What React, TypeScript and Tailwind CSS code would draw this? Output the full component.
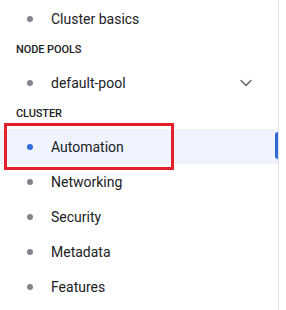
import { ChevronDown } from 'lucide-react';

type Item = { label: string; active?: boolean; expandable?: boolean };

function NavItem({ label, active, expandable }: Item) {
  return (
    <div
      className={`relative flex items-center h-[35px] pl-[27px] pr-[22px] ${
        active ? 'bg-[#eef3fd]' : ''
      }`}
    >
      <span
        className={`w-[6px] h-[6px] rounded-full shrink-0 ${
          active ? 'bg-[#2f6de1]' : 'bg-[#80868b]'
        }`}
      />
      <span className="ml-[18px] text-[14px] text-[#202124] leading-none">{label}</span>
      {expandable && (
        <ChevronDown className="ml-auto w-[20px] h-[20px] text-[#5f6368]" strokeWidth={1.6} />
      )}
      {active && (
        <>
          <span className="absolute right-0 top-[3px] h-[27px] w-[3px] rounded-l-sm bg-[#3367d6]" />
          <span className="absolute left-[4px] top-[-6px] w-[170px] h-[47px] border-[3px] border-[#e3202b]" />
        </>
      )}
    </div>
  );
}

function Header({ title }: { title: string }) {
  return (
    <div className="flex items-center h-[29px] pl-[16px] text-[11px] font-medium text-[#202124] tracking-[-0.1px]">
      {title}
    </div>
  );
}

export default function App() {
  return (
    <div className="w-[286px] h-[310px] bg-white overflow-hidden" style={{ fontFamily: 'Roboto, "Liberation Sans", sans-serif' }}>
      <nav className="w-[279px] h-full border-r border-[#e3e3e3] pt-[1px]">
        <NavItem label="Cluster basics" />
        <Header title="NODE POOLS" />
        <NavItem label="default-pool" expandable />
        <Header title="CLUSTER" />
        <NavItem label="Automation" active />
        <NavItem label="Networking" />
        <NavItem label="Security" />
        <NavItem label="Metadata" />
        <NavItem label="Features" />
      </nav>
    </div>
  );
}
